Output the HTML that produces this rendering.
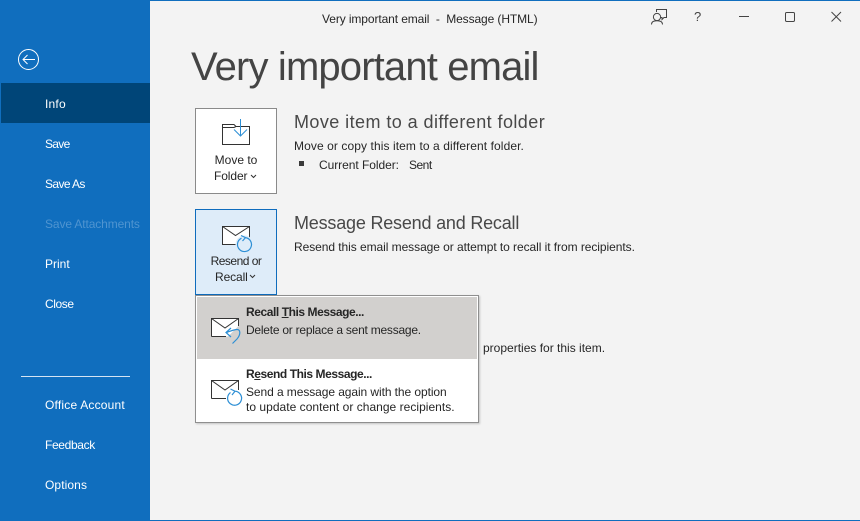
<!DOCTYPE html>
<html><head><meta charset="utf-8">
<style>
html,body{margin:0;padding:0;width:860px;height:521px;overflow:hidden;background:#f3f3f3;font-family:"Liberation Sans",sans-serif;color:#262626}
.a{position:absolute;white-space:nowrap}
#top{left:0;top:0;width:860px;height:1px;background:#106ebe}
#bot{left:0;top:520px;width:860px;height:1px;background:#106ebe}
#side{left:0;top:0;width:150px;height:521px;background:#106ebe}
#act{left:1px;top:83px;width:149px;height:40px;background:#004578}
.n{left:45px;color:#fff;font-size:12px;line-height:16px}
.t{font-size:12px;line-height:16px}
.h{font-size:18px;line-height:24px;color:#484848}
.btn{background:#fff;border:1px solid #8a8a8a;box-sizing:border-box}
.c{text-align:center;font-size:12px;line-height:16px;color:#262626}
.b{font-weight:bold;font-size:12px;line-height:16px;color:#262626}
svg{position:absolute;overflow:visible}
</style></head><body>
<div class="a" id="side"></div>
<div class="a" id="top"></div>
<div class="a" id="bot"></div>
<div class="a" id="act"></div>
<svg style="left:0;top:0" width="60" height="80"><circle cx="28.5" cy="59.5" r="10" fill="none" stroke="#fff" stroke-width="1"/><path d="M23 59.5H35M27.5 55L23 59.5L27.5 64" fill="none" stroke="#fff" stroke-width="1"/></svg>
<div class="a n" style="top:96px;letter-spacing:.2px">Info</div>
<div class="a n" style="top:136px;letter-spacing:-.7px">Save</div>
<div class="a n" style="top:176px;letter-spacing:-.6px">Save As</div>
<div class="a n" style="top:216px;color:#4f94d0;letter-spacing:-.12px">Save Attachments</div>
<div class="a n" style="top:256px">Print</div>
<div class="a n" style="top:296px;letter-spacing:-.4px">Close</div>
<div class="a" style="left:21px;top:376px;width:109px;height:1px;background:#d5e4f3"></div>
<div class="a n" style="top:397px;letter-spacing:.2px">Office Account</div>
<div class="a n" style="top:437px;letter-spacing:-.35px">Feedback</div>
<div class="a n" style="top:477px;letter-spacing:.1px">Options</div>

<div class="a t" style="left:322px;top:11px;letter-spacing:-0.1px">Very important email&nbsp; -&nbsp; Message (HTML)</div>
<svg style="left:640px;top:0" width="220" height="30">
<path d="M16.5 12V9.5H26.5V17.5H24L22 19.5V17.5H20" fill="none" stroke="#444" stroke-width="1"/>
<circle cx="17" cy="17" r="3.6" fill="#f3f3f3" stroke="#444"/>
<path d="M11.5 24.5C11.5 21.5 14 20.8 17 20.8S22.5 21.5 22.5 24.5" fill="none" stroke="#444"/>
<path d="M99 16.5H109" stroke="#444" fill="none"/>
<rect x="145.5" y="12.5" width="9" height="9" rx="1.2" fill="none" stroke="#444"/>
<path d="M191.5 12L201 21.5M201 12L191.5 21.5" stroke="#444" fill="none"/>
</svg>
<div class="a" style="left:694px;top:9px;font-size:13px;line-height:16px;color:#444">?</div>

<div class="a" style="left:191px;top:42px;font-size:40px;line-height:50px;color:#444;letter-spacing:-0.85px">Very important email</div>

<div class="a btn" style="left:195px;top:108px;width:82px;height:86px"></div>
<svg style="left:220px;top:118px" width="32" height="32">
<path d="M2.5 6.5H14L16 8.5H29.5V26.5H2.5Z" fill="none" stroke="#333"/>
<path d="M2.5 9.5H14L16 8.5" fill="none" stroke="#333"/>
<path d="M20.5 1V18M14 11.5L20.5 18L27 11.5" fill="none" stroke="#2d8fd5" stroke-width="1"/>
</svg>
<div class="a c" style="left:195px;top:152px;width:82px">Move to</div>
<div class="a c" style="left:214px;top:168px;text-align:left;letter-spacing:-.1px">Folder</div>
<svg style="left:250px;top:174px" width="8" height="5"><path d="M1 1L3.5 3.5L6 1" fill="none" stroke="#333"/></svg>

<div class="a h" style="left:294px;top:110px;letter-spacing:0.43px">Move item to a different folder</div>
<div class="a t" style="left:294px;top:138px;letter-spacing:.09px">Move or copy this item to a different folder.</div>
<div class="a" style="left:299px;top:161px;width:5px;height:5px;background:#3a3a3a"></div>
<div class="a t" style="left:319px;top:157px;letter-spacing:-.05px">Current Folder:</div>
<div class="a t" style="left:409px;top:157px;letter-spacing:-.5px">Sent</div>

<div class="a" style="left:195px;top:209px;width:82px;height:86px;box-sizing:border-box;background:#deecf9;border:1px solid #0f6cbd"></div>
<svg style="left:220px;top:224px" width="36" height="32">
<path d="M2.5 2.5H29.5V20.5H2.5Z" fill="#fff" stroke="#333"/>
<path d="M2.5 2.5L15.5 11.5L29.5 2.5" fill="none" stroke="#333"/>
<circle cx="24.5" cy="20.5" r="9" fill="#deecf9"/>
<path d="M21.5 14.2A7 7 0 1 0 25.5 13.6M21 11.5L25.5 13.6L22.5 17" fill="none" stroke="#2d8fd5" stroke-width="1.2"/>
</svg>
<div class="a c" style="left:195px;top:253px;width:82px;letter-spacing:-.5px">Resend or</div>
<div class="a c" style="left:215px;top:269px;letter-spacing:-.1px">Recall</div>
<svg style="left:249px;top:274px" width="8" height="5"><path d="M1 1L3.5 3.5L6 1" fill="none" stroke="#333"/></svg>

<div class="a h" style="left:294px;top:211px;letter-spacing:-.2px">Message Resend and Recall</div>
<div class="a t" style="left:294px;top:239px;letter-spacing:-0.06px">Resend this email message or attempt to recall it from recipients.</div>
<div class="a t" style="left:483px;top:340px">properties for this item.</div>

<div class="a" style="left:195px;top:295px;width:284px;height:128px;box-sizing:border-box;background:#fff;border:1px solid #8f8f8f;box-shadow:1px 1px 2px rgba(0,0,0,.2)"></div>
<div class="a" style="left:197px;top:297px;width:280px;height:62px;background:#d2d0ce"></div>

<svg style="left:210px;top:316px" width="34" height="32">
<path d="M1.5 2.5H28.5V10L18 20.5H1.5Z" fill="#fff"/>
<path d="M1.5 20.5V2.5H28.5V10M1.5 20.5H16M1.5 2.5L15 12L28.5 2.5" fill="none" stroke="#333"/>
<path d="M21 12L16 16.5L21 21M16.5 16.5C21 15 24 13.5 27 13.5C31 13.5 30.5 19 27 23C25 25 23.5 26.5 22.5 27.5" fill="none" stroke="#2d8fd5" stroke-width="1.2"/>
</svg>
<div class="a b" style="left:246px;top:304px;letter-spacing:-0.43px">Recall <u>T</u>his Message...</div>
<div class="a t" style="left:246px;top:322px;letter-spacing:-.24px">Delete or replace a sent message.</div>

<svg style="left:210px;top:378px" width="34" height="32">
<path d="M1.5 2.5H28.5V12L18 20.5H1.5Z" fill="#fff"/>
<path d="M1.5 20.5V2.5H28.5V12M1.5 20.5H16M1.5 2.5L15 12L28.5 2.5" fill="none" stroke="#333"/>
<path d="M20.5 14.5A7 7 0 1 0 25 13.2M20.5 11L25 13.2L22 17" fill="none" stroke="#2d8fd5" stroke-width="1.2"/>
</svg>
<div class="a b" style="left:246px;top:366px;letter-spacing:-0.43px">R<u>e</u>send This Message...</div>
<div class="a t" style="left:246px;top:384px;letter-spacing:-.08px">Send a message again with the option</div>
<div class="a t" style="left:246px;top:399px;letter-spacing:.03px">to update content or change recipients.</div>
</body></html>
